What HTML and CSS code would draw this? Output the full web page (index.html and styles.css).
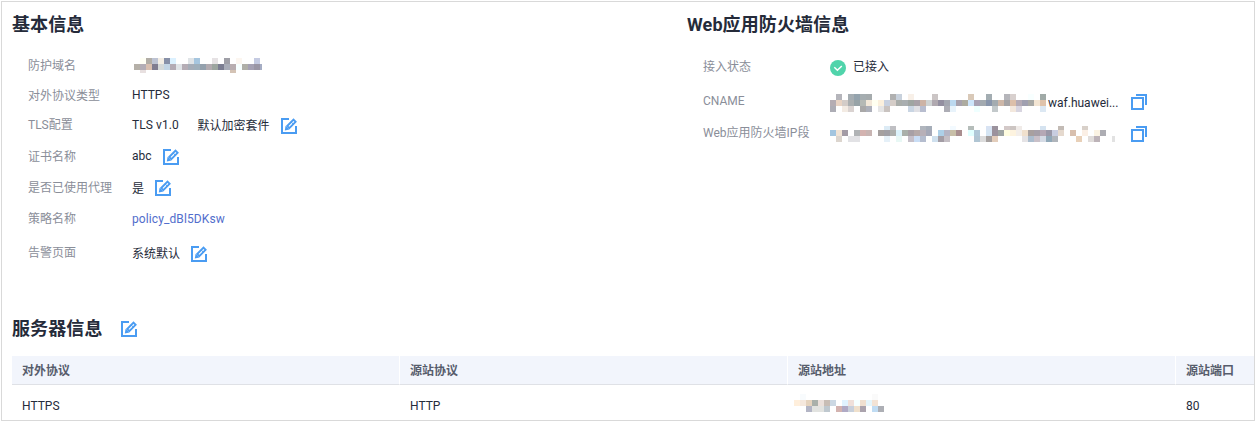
FILE: index.html
```html
<!DOCTYPE html>
<html lang="zh-CN">
<head>
<meta charset="utf-8">
<title>基本信息</title>
<link rel="stylesheet" href="styles.css">
</head>
<body>
<svg class="defs" width="0" height="0" aria-hidden="true">
  <symbol id="edit" viewBox="0 0 16 16">
    <path d="M8 1H1V15H15V8" fill="none" stroke="#4a9cf2" stroke-width="2"/>
    <path d="M3.8 12.4L4.6 7.8L8.4 11.6Z" fill="#4a9cf2"/>
    <path d="M6.2 8L12.5 1.7L14.6 3.8L8.3 10.1Z" fill="none" stroke="#4a9cf2" stroke-width="1.9"/>
    <path d="M10.1 3.9L12.4 6.2" stroke="#4a9cf2" stroke-width="1"/>
  </symbol>
  <symbol id="copy" viewBox="0 0 16 16">
    <path d="M1 4H12V15H1Z M5 1H15V11" fill="none" stroke="#4a9cf2" stroke-width="2"/>
  </symbol>
</svg>
<main class="panel">
  <div class="infos">
    <section class="info">
      <h2>基本信息</h2>
      <dl class="rows basic">
        <dt class="drop">防护域名</dt><dd><span class="mosaic domain" data-mask="domain"></span></dd>
        <dt class="drop">对外协议类型</dt><dd>HTTPS</dd>
        <dt>TLS配置</dt><dd><span class="tls">TLS v1.0</span><span class="drop">默认加密套件</span><svg class="icon low"><use href="#edit"/></svg></dd>
        <dt class="drop">证书名称</dt><dd>abc<svg class="icon low"><use href="#edit"/></svg></dd>
        <dt>是否已使用代理</dt><dd><span class="drop">是</span><svg class="icon"><use href="#edit"/></svg></dd>
        <dt>策略名称</dt><dd><a class="link">policy_dBl5DKsw</a></dd>
        <dt>告警页面</dt><dd><span class="drop">系统默认</span><svg class="icon low"><use href="#edit"/></svg></dd>
      </dl>
    </section>
    <section class="info">
      <h2>Web应用防火墙信息</h2>
      <dl class="rows waf">
        <dt>接入状态</dt><dd><svg class="status" viewBox="0 0 16 16"><circle cx="8" cy="8" r="8" fill="#50d4ab"/><path d="M4.3 7.3L7.4 10.3L11.8 6" fill="none" stroke="#fff" stroke-width="1.5"/></svg><span>已接入</span></dd>
        <dt>CNAME</dt><dd><span class="mosaic cname" data-mask="cname"></span><span class="host">waf.huawei...</span><svg class="icon"><use href="#copy"/></svg></dd>
        <dt>Web应用防火墙IP段</dt><dd><span class="mosaic range" data-mask="range"></span><svg class="icon"><use href="#copy"/></svg></dd>
      </dl>
    </section>
  </div>
  <section class="servers">
    <h2>服务器信息<svg class="icon"><use href="#edit"/></svg></h2>
    <div class="table">
      <div class="th">对外协议</div><div class="th">源站协议</div><div class="th">源站地址</div><div class="th">源站端口</div>
      <div class="td">HTTPS</div><div class="td">HTTP</div><div class="td"><span class="mosaic address" data-mask="address"></span></div><div class="td">80</div>
    </div>
  </section>
</main>
<script src="mosaic.js"></script>
</body>
</html>
```
FILE: styles.css
```css
* { box-sizing: border-box; }
body {
  margin: 0;
  padding: 1px 0 0 1px;
  background: #fff;
  color: #252b3a;
  font: 12px/18px Roboto, "Noto Sans CJK SC", sans-serif;
}
.defs { display: block; height: 0; }
.panel {
  width: 1254px;
  height: 420px;
  border: 1px solid #d9d9d9;
  overflow: hidden;
}
.infos {
  display: grid;
  grid-template-columns: 675px 1fr;
  height: 310px;
  padding: 10px 0 0 10px;
}
h2 {
  display: flex;
  align-items: center;
  margin: 0;
  height: 24px;
  padding-top: 2px;
  font-size: 18px;
  line-height: 22px;
  font-weight: 700;
  letter-spacing: 0.1px;
}
.rows {
  display: grid;
  margin: 0;
  padding: 14px 0 0 16px;
}
.basic {
  grid-template-columns: 104px 1fr;
  grid-template-rows: 30px 30px 30px 32px 32px 30px 38px;
}
.waf {
  grid-template-columns: 127px 1fr;
  grid-template-rows: 34px 34px 32px;
}
dt, dd {
  display: flex;
  align-items: center;
  margin: 0;
  white-space: nowrap;
}
dt { color: #8a8e99; }
dt.drop, span.drop { padding-top: 1px; }
.icon {
  display: block;
  width: 16px;
  height: 16px;
  margin-left: 11px;
  flex: none;
}
.low { position: relative; top: 1px; }
.tls { width: 65.5px; letter-spacing: 0.08px; }
.link { color: #526ecc; letter-spacing: 0.1px; }
.status { width: 16px; height: 16px; margin: 2px 7px 0 0; }
.mosaic { display: block; flex: none; }
.mosaic svg { display: block; }
.domain { margin-left: 2px; }
.cname { margin-top: 4px; }
.host { width: 72px; margin: 4px 0 0 2px; }
.waf .icon { margin: 2px 0 0 11px; }
.waf .range + .icon { margin: 0 0 0 16px; }
.waf dt:last-of-type { padding-bottom: 2px; }
.servers { padding: 4px 0 0 10px; }
.servers h2 .icon { margin: 0 0 0 18.5px; }
.table {
  display: grid;
  grid-template-columns: 388px 388px 388px 1fr;
  grid-template-rows: 29px 42px;
  margin-top: 16px;
}
.th, .td {
  display: flex;
  align-items: center;
  padding-left: 10px;
}
.th {
  padding-top: 2px;
  background: #f2f5fc;
  border-bottom: 1px solid #dfe1e6;
  border-right: 1px solid #fff;
  color: #575d6c;
  font-weight: 700;
}
.th:nth-child(4) { border-right: 0; }
.address { margin: -6px 0 0 -4px; }
```
FILE: mosaic.js
```js
// Each row: [height, first column, "colour colour ..."]; "-" leaves a block empty.
const masks = {
  domain: { width: 128, rows: [
    [6, 1, "fffff5 b1ada6 bdc3d3 f3ede4 8790a8 dcf1ff - - e0e4e7 a6c6df - - e6e2e4 - 9f9fa7 - fcf6f0 - - c5cbe2"],
    [6, 0, "b5b0a8 b3adb5 d8bfb0 7f7c90 d5d9d9 c3d5e5 b3abb5 e0e4e8 b5adb5 a5adb8 9fafbb 94a1ad b2abb0 9ca59f 7b7d91 a9adb8 b8adb0 f7ffff b0afa8 a5a1b3 9a96a5 a5adc4"],
    [3, 1, "e8e0e0 - - - - - - - - - - - - - - d4c3b5"]
  ]},
  cname: { width: 216, rows: [
    [6, 1, "b5b5bb - a5adb2 94a3ad a5adb0 a5abad - - - b0b0b0 c8d1dc - f8f0e8 - - - cbc5c5 - - - - - d9c9b8 - - a3adb2 - - b5b5ba d8d0ce - - f8ffff - a0aaa7"],
    [6, 0, "b5adb3 e8d3c3 d3ccc8 abafb0 98a3a7 b5b9b5 f3e8d9 fffff0 fbf0dd c8d1e0 d5cdc8 a9adaa a9aeb0 9fa5a2 a8a1a8 cdb3a5 cfd3d3 b0a9b0 938fa0 a3a6b0 bcd9f0 a7a1ad adaba0 cde5fb a8a2b5 a3aab0 8895ab a3abb0 cdb7a8 a5a3a5 dcbfa9 b5abb5 a0a0b0 a9a9a5 f3e5d3 dfc3ab"],
    [6, 0, "adadb5 - f3ebe3 dad3d1 - a9a8a8 adb0ba - e5e5e5 c9c3c0 - - - c9d5e3 e0e0e5 b8bdcf - - - adadb5 e8f3fb - - - efffff - - c3c9cb - - f3e8dd d8d5e0 - - - dce8f3"]
  ]},
  range: { width: 285, rows: [
    [4, 9, "dcebf5 bfbfc3 - - - - b0b5bd a5adb8 - - - f3faff - - b5bdba - - d8e3f3 9b929d - d3c9c8 ccc5c2 f0ebe8 - - - d5e3f0 - - c3bbb5 - - - d8d0c9"],
    [6, 0, "a3c5df f0e3d5 a39ba5 - b0b3b5 d3b3b0 c8b5b3 - a5a09f a09fa5 adb0ad dcf3fb aab0aa a8a0a5 b5a9a8 b8b0b8 a5a8b8 - add0e8 b5b5c5 c8bfa8 a98f90 - e0ffff b0c8d8 - d5e5f3 9b929d 9fa5a3 fffde0 fdf3df f3eeea f0e0cd a8a09f a59fa8 b5a8b5 9a98a8 c8cde0 e5d9ce - d8bfad - fbefe5 - fbf3e3 adadb3"],
    [6, 1, "dcd5ce - e2e2e5 e2e2e5 - - - - e5f0f8 - e8f8f5 - c5bfc8 c9ddf5 b5bdcf - cfe0ee a39da5 c5bfc5 - - - - b0c5d3 dcdcdc a5a09f e3cdbb - - - - e5e3e5 abbdce c9c0c8 d5dbe5 90a8b8 b0b5bb - - - e8d0b8 - e0dcda bdb3b8 - - e2e2e2"]
  ]},
  address: { width: 90, rows: [
    [6, 1, "f8fbfd - - - - - - - - - - - fafafa"],
    [6, 0, "ffefdc f5e8dd e5d3be aab0aa ebe0db c8bdb5 ccd8e3 - e0f3ff efe0da f5ffff f0e0d0 e5f5fb f3e3d5"],
    [6, 2, "b3b5c5 e2e3e0 e2e3e0 bfc8cf - d3b3b0 b0aac5 c8d0db efe0cc aba3ad - c0dcf3 adafb5"]
  ]}
};

for (const el of document.querySelectorAll("[data-mask]")) {
  const mask = masks[el.dataset.mask];
  let y = 0;
  let rects = "";
  for (const [height, start, colours] of mask.rows) {
    colours.split(" ").forEach((colour, i) => {
      if (colour !== "-") {
        rects += `<rect x="${(start + i) * 6}" y="${y}" width="6" height="${height}" fill="#${colour}"/>`;
      }
    });
    y += height;
  }
  el.innerHTML = `<svg width="${mask.width}" height="${y}" shape-rendering="crispEdges">${rects}</svg>`;
}
```
